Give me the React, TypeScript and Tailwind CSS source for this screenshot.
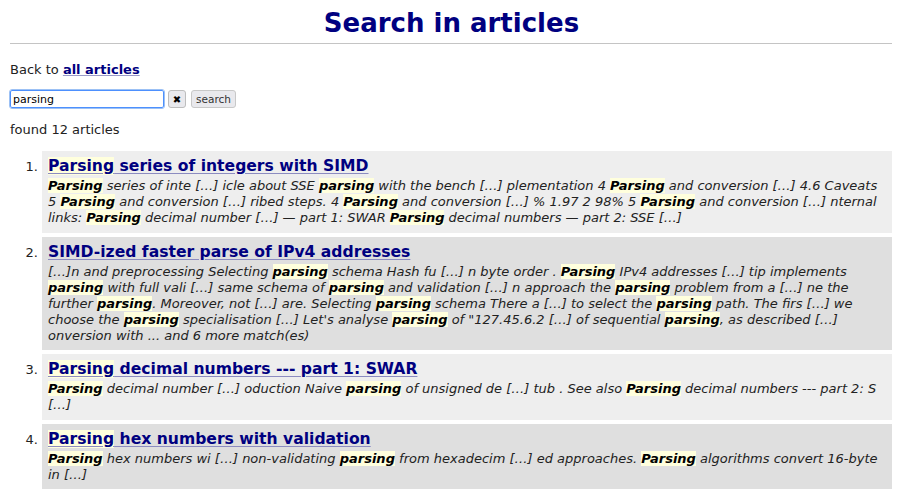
import React from "react";

type Item = { title: string; snippet: string };

const items: Item[] = [
  {
    title: "**Parsing** series of integers with SIMD",
    snippet:
      "**Parsing** series of inte […] icle about SSE **parsing** with the bench […] plementation 4 **Parsing** and conversion […] 4.6 Caveats 5 **Parsing** and conversion […] ribed steps. 4 **Parsing** and conversion […] % 1.97 2 98% 5 **Parsing** and conversion […] nternal links: **Parsing** decimal number […] — part 1: SWAR **Parsing** decimal numbers — part 2: SSE […]",
  },
  {
    title: "SIMD-ized faster parse of IPv4 addresses",
    snippet:
      "[…]n and preprocessing Selecting **parsing** schema Hash fu […] n byte order . **Parsing** IPv4 addresses […] tip implements **parsing** with full vali […] same schema of **parsing** and validation […] n approach the **parsing** problem from a […] ne the further **parsing**. Moreover, not […] are. Selecting **parsing** schema There a […] to select the **parsing** path. The firs […] we choose the **parsing** specialisation […] Let's analyse **parsing** of \"127.45.6.2 […] of sequential **parsing**, as described […] onversion with ... and 6 more match(es)",
  },
  {
    title: "**Parsing** decimal numbers --- part 1: SWAR",
    snippet:
      "**Parsing** decimal number […] oduction Naive **parsing** of unsigned de […] tub . See also **Parsing** decimal numbers --- part 2: S […]",
  },
  {
    title: "**Parsing** hex numbers with validation",
    snippet:
      "**Parsing** hex numbers wi […] non-validating **parsing** from hexadecim […] ed approaches. **Parsing** algorithms convert 16-byte in […]",
  },
];

function renderMarked(text: string, markClass: string) {
  const parts = text.split(/(\*\*[^*]+\*\*)/);
  return parts.map((p, i) => {
    if (p.startsWith("**") && p.endsWith("**")) {
      return (
        <span key={i} className={markClass}>
          {p.slice(2, -2)}
        </span>
      );
    }
    return <React.Fragment key={i}>{p}</React.Fragment>;
  });
}

export default function App() {
  return (
    <div
      className="min-h-[494px] bg-white px-[10px] text-[13px] text-[#222]"
      style={{ fontFamily: '"DejaVu Sans", Verdana, sans-serif' }}
    >
      <h1 className="pt-[7px] text-center text-[26px] font-bold leading-[33px] text-[#000080]">
        Search in articles
      </h1>
      <div className="mt-[3px] mr-[1px] h-px bg-[#c4c4c4]" />
      <p className="mt-[18px] leading-[16px]">
        Back to{" "}
        <a href="#" className="font-bold text-[#000080] underline decoration-[#9a9ac8]">
          all articles
        </a>
      </p>
      <div className="mt-[12px] flex items-center">
        <input
          type="text"
          defaultValue="parsing"
          className="h-[18px] w-[154px] rounded-[2px] border border-[#4d90fe] px-[2px] text-[11px] text-black outline outline-1 outline-[#9cc1f5]"
        />
        <button className="ml-[4px] flex h-[18px] w-[18px] items-center justify-center rounded-[3px] border border-[#bdbdbd] bg-[#e9e9ed] text-[10px] text-black">
          ✖
        </button>
        <button className="ml-[5px] h-[18px] w-[45px] rounded-[3px] border border-[#c8c8c8] bg-[#e9e9ed] px-0 text-[10.5px] leading-[16px] text-[#333]">
          search
        </button>
      </div>
      <p className="mt-[14px] leading-[16px]">found 12 articles</p>
      <ol className="mt-[13px] flex flex-col gap-[4px]">
        {items.map((it, idx) => (
          <li key={idx} className="flex items-baseline">
            <span className="w-[32px] shrink-0 pr-[4px] text-right">{idx + 1}.</span>
            <div
              className={
                "mr-[1px] flex-1 px-[6px] pb-[6.5px] pt-[5px] " +
                (idx % 2 === 0 ? "bg-[#eeeeee]" : "bg-[#dfdfdf]")
              }
            >
              <a
                href="#"
                className="mb-[2px] block text-[15.6px] font-bold leading-[20px] text-[#000080]"
              >
                <span className="underline decoration-[#8c8cc0] underline-offset-[2px]">
                  {renderMarked(it.title, "bg-[#ffffdd]")}
                </span>
              </a>
              <p className="italic leading-[16px] text-[#222]">
                {renderMarked(it.snippet, "bg-[#ffffdd] font-bold text-black")}
              </p>
            </div>
          </li>
        ))}
      </ol>
    </div>
  );
}
